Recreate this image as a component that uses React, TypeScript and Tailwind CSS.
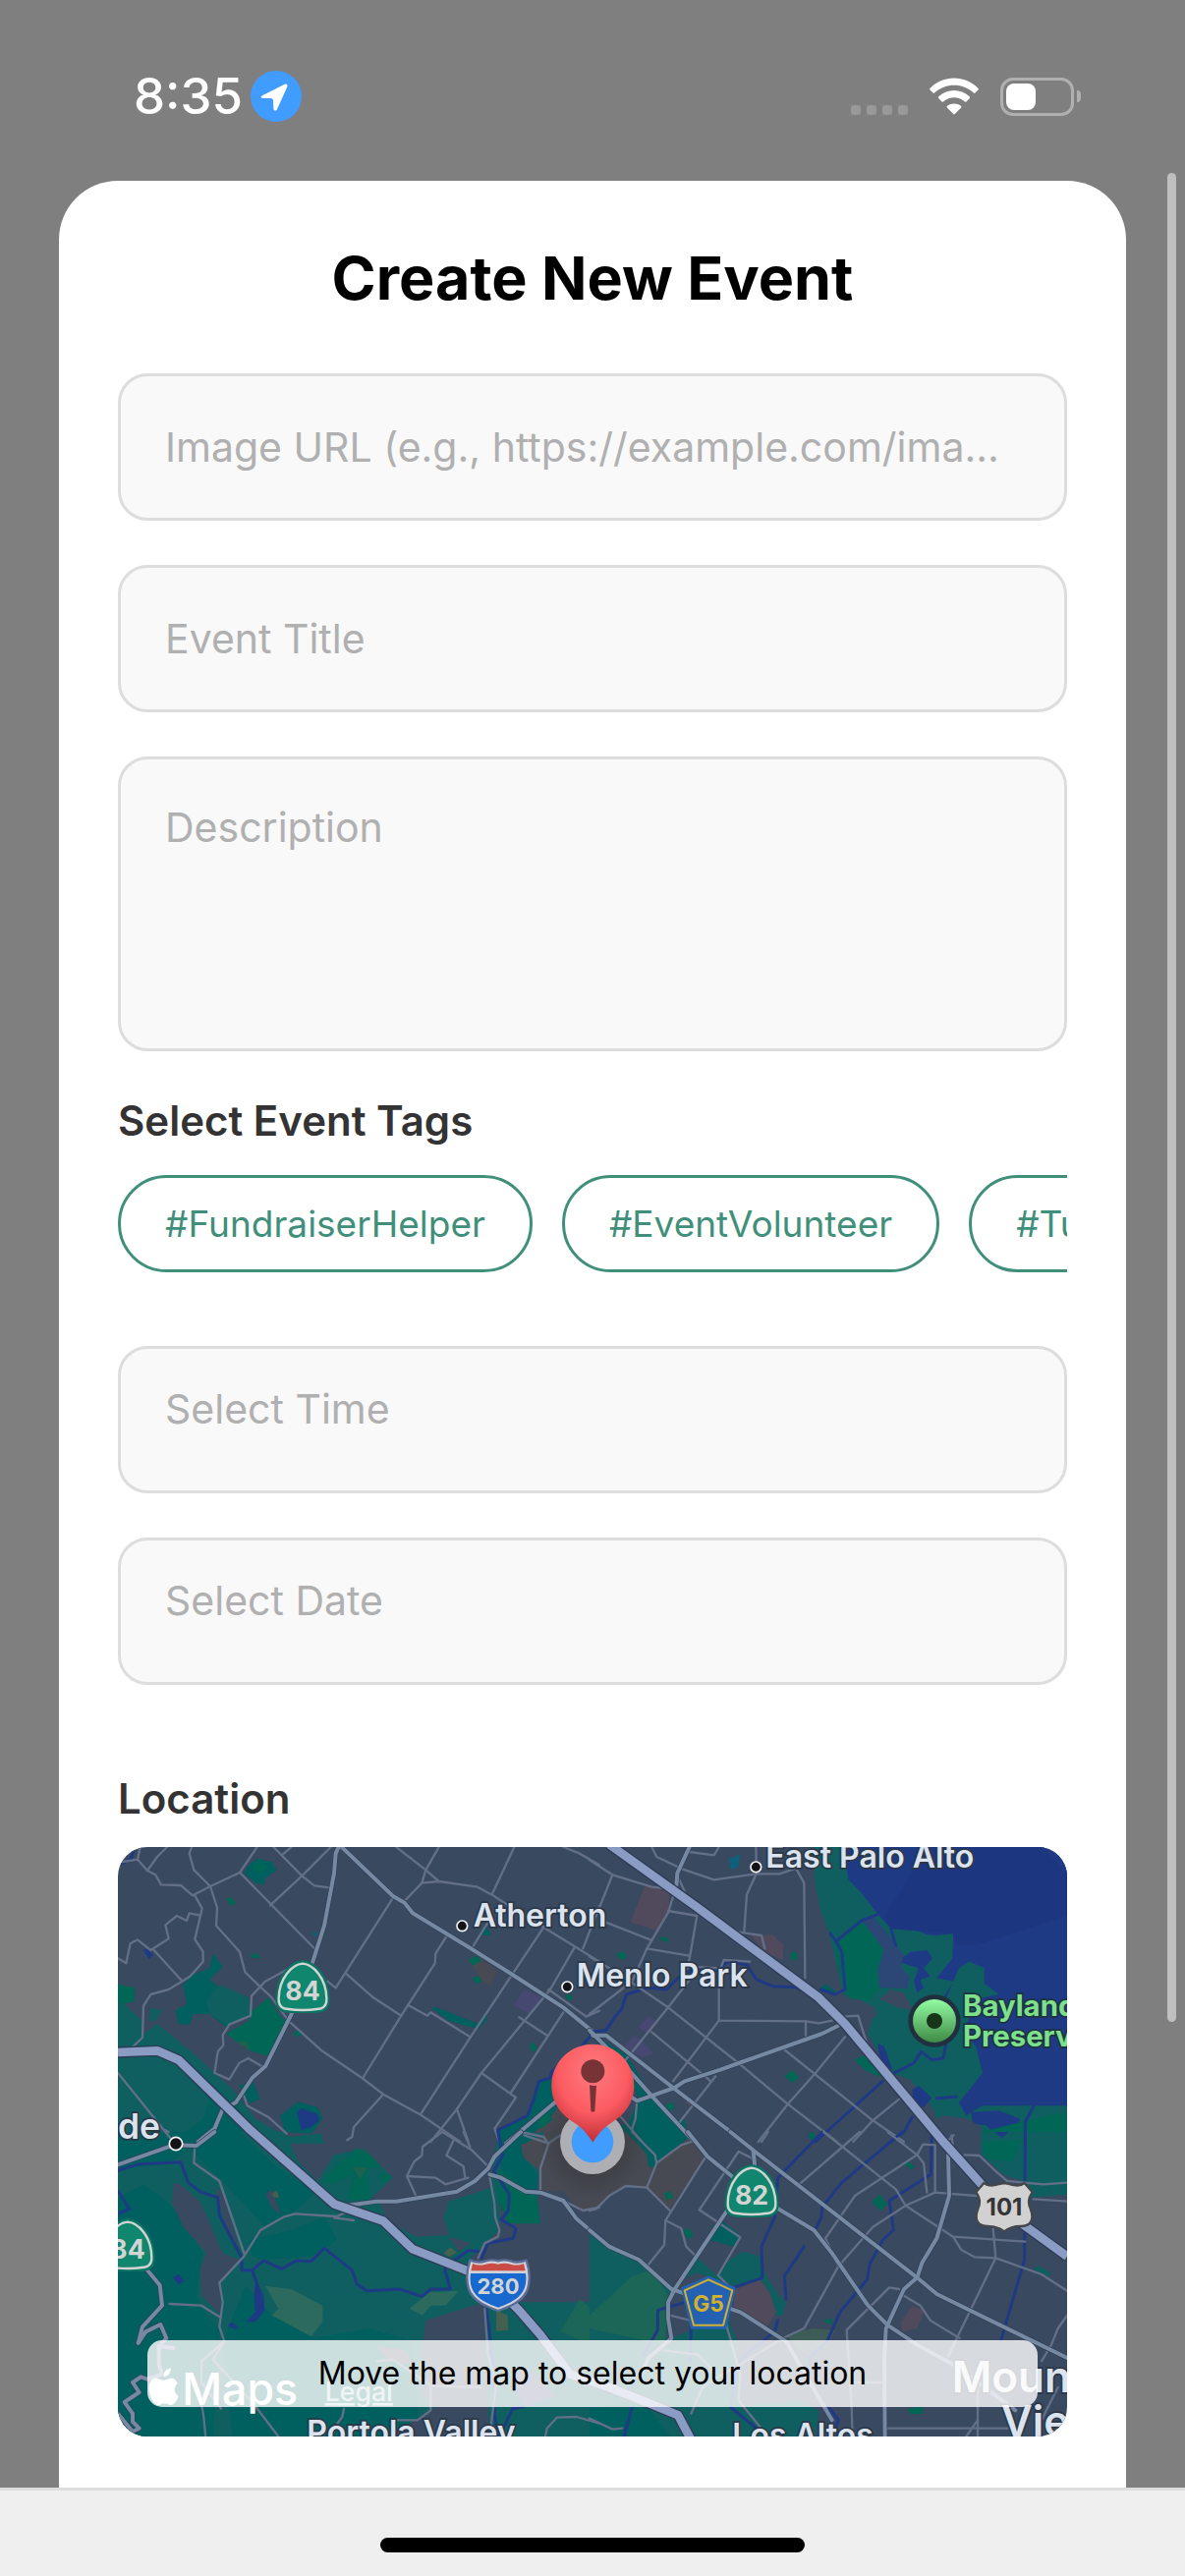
import type { ReactNode } from 'react';

const tags = ['#FundraiserHelper', '#EventVolunteer', '#TutoringHelp', '#FoodDrive'];

type Area = [color: string, points: string];

type Tile = {
  x: number;
  y: number;
  areas: Area[];
  streams: string[];
  streets: string[];
  roads: string[];
};

const slate = '#394960';
const teal = '#0f5f60';
const pine = '#005f5f';
const green = '#006656';
const water = '#1f3a85';
const rose = '#504a5c';
const violet = '#464872';
const campus = '#474a53';

// Every tile is drawn in its own coordinates and moved to its corner of the map.
const tiles: Tile[] = [
  {
    x: -30,
    y: -30,
    areas: [
      [teal, '110,600 150,570 260,660 380,770 450,860 545,915 650,905 660,935 30,935 30,670'],
      [pine, '250,740 300,735 400,830 460,930 200,930 290,860 310,800'],
      [pine, '400,760 440,740 465,800 430,812'],
      [teal, '30,450 30,645 70,640 105,610 105,560 50,510 80,500 80,460'],
      [green, '30,450 80,460 80,500 30,510'],
      [teal, '130,520 165,530 145,560 125,560'],
      [pine, '320,355 350,395 310,435 340,460 380,560 360,580 310,540 260,540 250,572 215,570 205,530 240,510 228,450 260,420 310,400'],
      [teal, '340,450 430,490 435,545 370,575 310,540 300,500'],
      [green, '490,490 520,540 550,570 490,670 430,650 360,600 430,560 440,530'],
      ['#1d6150', '385,622 425,625 435,650'],
      [pine, '455,65 500,75 515,100 480,125 475,145 450,140 415,110 430,85'],
      [green, '445,75 470,75 490,95 460,108 440,98'],
      [green, '360,188 375,184 393,205 375,208'],
      [green, '432,360 450,354 468,370 440,368'],
      [green, '565,600 578,588 594,602 575,610'],
      [pine, '525,850 580,808 640,825 655,860 620,905 540,900'],
      [water, '577,840 590,828 640,845 645,865 620,885 590,895'],
      [water, '107,345 120,340 138,360 125,372'],
      ['#0f5f78', '622,292 642,292 634,306'],
      [pine, '985,520 1010,522 1130,570 1160,525 1155,560 1130,585 1090,575 1040,560'],
      [campus, '1095,375 1140,370 1188,410 1170,455 1140,440 1115,395'],
      [green, '1100,375 1125,362 1140,376 1115,392'],
      [green, '1112,432 1130,422 1142,440 1125,448'],
      [pine, '1140,300 1155,272 1170,300'],
      [green, '1395,485 1410,478 1420,492 1405,500'],
      [violet, '1270,465 1325,490 1290,540 1238,515'],
      [green, '1285,640 1298,626 1310,644 1298,656'],
      [campus, '1330,790 1380,770 1440,830 1440,935 1270,935 1260,900'],
      [pine, '1310,750 1360,735 1390,800 1340,870 1290,910 1240,930 1190,930 1190,895 1280,850'],
      [green, '1310,850 1340,835 1358,862 1320,890'],
    ],
    streams: ['1500,595 1480,600 1445,640 1355,715 1350,735 1315,745 1300,800 1280,850 1190,895 1195,930', '42,80 70,66 78,40'],
    streets: [
      '30,370 55,385 68,325 90,313 130,345 185,310 175,268 210,240 240,255 248,232 278,238',
      '140,345 225,438',
      '45,75 90,68 120,102 145,115 162,145 222,147 258,178 312,150 402,108 455,30',
      '90,68 98,30',
      '120,102 150,60 180,30',
      '262,10 248,50 262,100 312,150 333,215 330,270 402,350 418,412 500,490 550,560 650,650 775,735 840,785 955,848 1075,930',
      '265,178 287,218 265,312 290,350 290,380 250,425 185,465 130,480 108,515 105,612 75,640',
      '402,108 635,345',
      '505,30 592,118 630,148 680,155',
      '530,55 560,30',
      '680,30 592,118 495,208',
      '880,30 970,100 1010,135',
      '1010,30 970,100 958,140 905,195',
      '958,140 1010,135 1128,152 1175,178 1330,275 1500,380',
      '1240,30 1172,175',
      '1390,30 1440,50 1500,85',
      '870,185 695,460 670,440',
      '725,415 810,490 895,545',
      '1035,300 1000,355 998,385 895,545 778,735',
      '915,512 975,545 985,535 1105,610',
      '1110,340 1160,260',
      '1330,275 1110,605 955,845',
      '1425,335 1350,465 1140,720 1065,830 985,930',
      '1390,535 1230,780',
      '1140,720 1245,795 1180,890 1195,930',
      '1255,550 1340,605',
      '1065,830 1100,930',
      '1345,465 1460,548 1500,530',
      '1500,210 1450,340',
      '840,785 750,885 745,915 730,925',
      '545,405 480,440 438,485 435,545 370,572 350,605 352,635 335,655 325,720 370,740 400,690 428,675 470,700',
      '415,790 425,820 490,855 545,905',
      '30,720 195,925',
      '1260,900 1330,915 1340,930',
    ],
    roads: [
      '708,20 695,50 690,110 660,270 625,380 560,540 480,700 440,735 390,810 350,830 325,890 275,930',
      '708,25 870,180 905,200 930,232 1100,335 1235,420 1390,520 1500,610',
      '1400,780 1215,935',
    ],
  },
  {
    x: 1440,
    y: -30,
    areas: [
      [teal, '680,30 1470,30 1470,935 1200,935 1195,880 1060,860 1050,830 980,740 920,720 850,600 870,530 830,500 775,480 730,290 705,220 690,150'],
      [water, '775,30 1470,30 1470,820 1200,820 1150,850 1128,810 1200,720 1180,640 1115,560 1080,490 1105,450 1205,460 1205,400 1160,380 1128,400 1110,440 1060,430 1040,360 1108,350 1110,300 1060,310 1000,285 920,280 880,235 830,170 790,130'],
      [teal, '1110,440 1210,450 1250,480 1200,490 1130,600 1085,500'],
      ['#1d3680', '1000,30 1380,30 1470,120 1470,235 1180,330 1120,330 1110,295 920,280 900,240 980,120'],
      [teal, '935,290 1060,300 1110,295 1108,370 1060,430 1000,480 920,460'],
      [water, '940,380 980,350 1030,345 1048,370 1020,400 1040,425 1010,435 1020,460 1000,475 990,440 1005,400'],
      [green, '750,320 840,250 890,300 892,360 875,410 885,460 850,500 790,492 770,430'],
      ['#2c4676', '830,252 870,245 960,360 950,395 978,430 970,462 885,460 882,400 900,345'],
      [slate, '885,495 920,465 960,475 990,530 940,520'],
      [slate, '820,495 870,520 875,545 850,560'],
      [pine, '700,465 720,448 750,470 760,480'],
      [green, '808,680 850,660 900,720 880,730 840,710'],
      [water, '880,630 900,640 925,710 890,700'],
      [water, '985,770 1005,760 1045,795 1020,825 990,815'],
      [water, '1165,840 1250,835 1315,860 1300,900 1250,920 1210,880 1170,875'],
      [green, '1195,900 1400,850 1470,840 1470,935 1195,935'],
      [slate, '1040,870 1080,850 1160,860 1195,890 1195,935 1090,935'],
      [rose, '170,145 245,165 240,225 205,285 125,260'],
      [rose, '495,300 560,298 592,330 590,375 530,350'],
      [violet, '180,545 208,570 180,600 150,580'],
      [violet, '135,605 160,620 195,660 160,675 105,640'],
      ['#0f5f78', '425,65 460,52 455,90 430,98'],
      [green, '210,310 235,302 242,322'],
      [green, '80,355 105,350 115,366 95,376'],
      [green, '615,352 634,352 634,374 615,374'],
      [green, '595,730 620,712 640,735 620,750'],
      [green, '665,912 680,898 690,915 678,925'],
      [pine, '40,620 110,660 190,790 320,935 90,935 150,800 110,700'],
      [campus, '150,900 180,890 210,935 130,935'],
      [green, '230,820 250,808 262,826 248,836'],
      [rose, '288,805 312,800 306,822'],
    ],
    streams: [
      '0,595 50,590 80,545 98,525 112,480 180,460 235,465 270,430 320,400 390,405 425,378 480,390 510,435 560,455 630,458 680,485',
      '705,465 750,480 780,465 770,350 752,318 830,255 880,235',
      '735,295 755,320',
      '920,725 990,690 1012,655 1045,680 1080,675 1090,620',
      '895,745 690,930',
      '985,855 960,900 920,930',
      '1440,660 1375,705 1382,770 1330,870 1330,935',
      '1060,797 1120,793',
      '920,280 935,330',
    ],
    streets: [
      '0,70 70,115 190,152 245,158',
      '70,115 20,240',
      '190,30 205,60 285,98 380,130 510,112 580,112 630,95',
      '305,45 380,55 395,30',
      '508,30 510,110 480,175 472,290',
      '630,95 655,140 658,430',
      '265,150 240,230 175,340 130,440 0,540',
      '240,225 328,240 300,400',
      '50,260 190,315',
      '175,340 305,362',
      '0,365 60,400 130,445 240,520 455,690 605,815 755,930',
      '265,110 290,165',
      '325,410 240,520 90,705',
      '395,440 395,560 660,562 700,568 740,560',
      '395,560 255,745',
      '660,562 660,605',
      '190,595 370,745',
      '590,645 865,865 960,930',
      '780,610 690,720 605,815 515,930',
      '945,800 865,865 805,930',
      '300,395 400,400 410,375 490,380',
      '455,290 525,300 535,340',
      '740,550 820,545 845,625',
      '145,805 140,860 130,890',
      '75,830 160,930',
      '385,730 275,870',
      '1090,930 1112,910',
    ],
    roads: [
      '305,30 268,110 265,150',
      '0,590 110,700 190,790 320,930',
      '10,605 50,605 255,765 470,930',
      '100,775 145,805 260,765 290,745 400,710 455,690 710,600 760,575',
    ],
  },
  {
    x: -30,
    y: 870,
    areas: [
      [teal, '30,0 540,0 580,90 640,150 690,70 780,50 870,140 800,205 900,215 1030,215 1170,170 1180,60 1190,20 1330,0 1310,180 1180,330 1110,380 1100,430 1160,520 1500,520 1500,935 30,935'],
      [pine, '30,0 400,0 520,110 640,180 560,250 480,290 350,150 250,50 180,100 30,110'],
      [pine, '30,200 110,160 200,230 290,370 270,500 300,560 340,600 320,935 30,935'],
      [pine, '430,330 560,300 660,260 700,330 620,380 480,390 440,380'],
      [pine, '420,470 500,560 630,630 800,600 930,640 950,935 380,935 350,640'],
      [slate, '200,155 220,160 280,210 350,370 400,390 340,460 345,560 285,500 280,420 300,370 230,290 195,220'],
      [slate, '325,165 350,190 405,370 360,290'],
      [slate, '480,190 500,175 520,230 525,255 500,230'],
      [slate, '830,215 1040,215 1025,260 1040,315 940,320 850,270'],
      [slate, '1040,320 1110,340 1070,365'],
      [slate, '1195,200 1240,290 1230,325 1150,340 1195,300'],
      [slate, '970,575 1150,520 1150,640 1165,935 850,935 1000,840 960,800 960,650'],
      [green, '655,150 700,100 760,50 800,70 835,108 790,110 800,210 730,205 750,130 680,160'],
      ['#1d6150', '745,105 790,110 770,145'],
      [green, '830,128 865,132 860,150 830,150'],
      [green, '1200,90 1310,200 1320,280 1220,280 1190,200'],
      [pine, '1190,20 1300,0 1260,60 1310,130 1310,200 1200,120'],
      [campus, '1260,40 1330,10 1500,0 1500,235 1440,240 1390,180 1320,180 1320,120 1270,80'],
      ['#2c6a5e', '480,470 560,480 655,530 655,580 620,625 500,560 520,540'],
      ['#2c6a5e', '920,540 980,490 1070,485 1030,530 985,530 960,560'],
      ['#46604f', '1185,545 1220,560 1222,605 1185,608'],
      ['#1c6657', '1440,510 1500,560 1500,660 1380,610'],
      ['#46604f', '1025,370 1045,352 1065,368 1040,382'],
      ['#46604f', '500,190 515,178 522,200 508,202'],
      [water, '452,450 475,500 478,545 450,580 422,580 450,550 445,500'],
      [water, '197,445 215,435 235,455 215,465'],
      [water, '365,590 380,580 400,600 385,602'],
      [violet, '1235,745 1280,715 1310,750 1365,805 1270,840 1250,800'],
      ['#4d4c60', '820,655 910,665 930,710 860,700'],
    ],
    streams: [
      '30,118 95,98 222,92 245,155 285,185 335,200 340,255 408,385 408,422 440,422 475,393 530,418 575,393 620,395 660,355 745,422 760,465 790,485 890,480 958,502 985,480 1045,480 1028,420 1045,400 1100,362 1140,365',
      '440,422 455,465',
      '30,180 65,235 30,250',
      '1190,0 1205,70 1178,120 1225,190 1222,240 1200,268 1245,295 1237,325 1160,340 1140,385',
      '1155,540 1175,700 1180,860 1190,935',
      '1205,910 1235,845 1270,838',
    ],
    streets: [
      '265,40 262,95 340,150 415,370',
      '185,0 175,-5',
      '700,258 570,250 535,260 465,300 415,380 340,460 350,520 340,595 355,640 320,695 440,825 520,930',
      '188,525 285,530 340,565',
      '355,640 285,700 285,765 345,845',
      '285,830 292,870 298,935',
      '1020,0 960,45 958,72 935,90 912,135 940,195',
      '912,135 1000,140 1030,160 1100,140',
      '1020,0 1110,55 1165,110',
      '1055,25 1033,72 1085,105 1090,140',
      '1085,0 1105,45',
      '1165,135 1180,220 1182,260 1195,300 1190,320 1150,340 1130,385',
      '1150,540 1160,680 1185,770 1165,930',
      '820,700 870,695 920,730 985,775 1140,780',
      '985,775 985,850 945,880 885,880',
      '720,845 715,870 690,905',
      '1335,930 1340,905 1370,872 1430,870 1500,890',
      '1270,10 1345,35 1320,110 1320,180',
      '1345,35 1380,10 1400,15',
      '1400,215 1450,240 1500,230',
      '770,225 690,262 750,270',
    ],
    roads: [
      '30,100 200,40 270,42 325,0',
      '725,225 820,212 880,212 1065,182 1120,150 1160,112 1180,75 1260,0',
      '1165,130 1200,140 1275,182 1320,185 1390,210 1430,265 1500,325',
      '118,420 158,468 165,530 105,595 92,645 115,610 160,588 178,630 155,655 155,710 165,740 120,755 100,748 75,765 95,795 50,825 75,860 75,885 95,905 75,915 30,860',
      '155,655 200,660',
    ],
  },
  {
    x: 1440,
    y: 870,
    areas: [
      [campus, '0,0 140,0 180,20 300,10 350,80 245,235 175,170 110,165 60,195 0,240'],
      [pine, '90,-20 290,-40 300,20 200,95 150,40'],
      [pine, '175,70 210,75 200,110 180,105'],
      [teal, '0,300 60,350 150,390 250,480 230,640 100,700 0,720'],
      [teal, '0,600 250,630 420,560 450,640 460,935 0,935'],
      ['#1c6657', '0,560 130,440 190,420 240,500 230,650 0,600'],
      [pine, '0,840 160,820 250,935 0,935'],
      [teal, '320,370 395,410 470,365 520,380 540,440 570,490 600,520 590,560 560,560 530,460 450,470 400,455 330,430 280,450'],
      [slate, '320,375 430,380 390,440'],
      [pine, '375,285 410,275 460,315 440,350 370,330'],
      [green, '285,300 305,295 318,315 300,328'],
      [green, '228,188 245,180 258,200 235,208'],
      [rose, '440,485 520,450 550,490 570,550 540,600 440,545'],
      [rose, '985,530 1022,545 1000,600 955,610 950,580'],
      ['#3d5c58', '600,620 680,600 750,605 720,660 640,670'],
      [green, '712,575 740,570 740,590'],
      [green, '862,215 885,190 910,220 890,240'],
      [green, '962,98 975,90 992,108 980,115'],
      [teal, '1195,0 1470,0 1470,190 1340,200 1320,150 1265,130 1195,70'],
      [green, '1200,30 1320,25 1290,90 1210,80'],
      [teal, '1355,420 1370,408 1410,432 1400,440'],
      [green, '970,845 1015,840 1018,860 980,862'],
      [water, '1235,0 1280,0 1260,18'],
      [teal, '430,840 640,820 700,850 690,935 440,935'],
    ],
    streams: [
      '710,0 575,140 565,260 525,350 528,445 440,475',
      '955,0 770,155 710,230 708,260 692,295',
      '1045,10 1042,130 915,210 928,300 895,330 855,405 848,450 765,550 725,640 670,690 680,740',
      '655,350 595,440 600,510',
      '575,575 565,610 455,700 430,840 540,930',
      '1330,0 1328,390 1255,640',
      '285,522 208,545 208,605 165,680',
      '310,595 308,700',
      '130,840 105,930',
      '730,840 760,880 750,905',
      '1250,820 1290,870',
    ],
    streets: [
      '130,0 200,70 205,95 175,170 110,165 60,195 20,235 0,240',
      '205,95 280,40 310,30',
      '175,170 245,240',
      '352,80 232,270 228,345 180,405',
      '232,270 280,295 295,350 325,380',
      '545,0 525,30',
      '505,85 455,60 335,238 460,322 392,438 420,465',
      '715,0 935,175 965,225 1110,320 1330,335',
      '825,0 640,160',
      '910,0 1000,70 1020,95 1030,185',
      '1000,70 1018,38 1055,40 1055,185',
      '1000,70 810,195 720,325 760,410 655,600 590,630',
      '1180,195 1055,185 965,225 865,290 760,410',
      '1145,70 1190,72 1240,120 1275,150 1385,160 1458,155',
      '1355,205 1458,212',
      '1110,320 1135,360 1175,382 1240,385 1380,435 1458,485',
      '1232,295 1240,385 1095,685',
      '945,480 915,475 785,605 800,840 803,935',
      '960,500 1010,530 1040,575 1130,630',
      '415,580 460,740 455,820 520,900',
      '590,630 460,710 390,750 345,780 310,860',
      '245,560 305,575',
      '210,665 330,680 370,720 390,770',
      '800,765 900,765',
      '905,905 1290,905',
      '1185,765 1185,935',
      '1150,930 1185,880',
      '0,875 70,908 100,905',
      '1458,560 1430,600 1410,650 1380,700',
      '1430,780 1380,880',
      '1105,10 1112,60',
    ],
    roads: [
      '300,0 360,75 440,140 560,225 685,300 740,370 850,530 910,590 1000,650 1110,710 1300,850',
      '430,0 505,60 1000,445 1060,495 1458,690',
      '500,60 505,110',
      '0,300 60,350 150,390 250,480 460,550 600,640 740,880',
      '420,240 260,480 240,520 240,570 250,630 180,690 155,745',
      '1095,70 1098,195 1060,325 1015,400 1000,445 960,480 905,600 900,690 902,935',
    ],
  },
];

const highways = [
  '0,627 120,622 185,650 400,860 660,1090 810,1142 900,1228 1070,1295 1160,1350 1225,1415 1290,1490 1380,1610 1500,1650 1600,1690 1710,1735 1750,1810',
  '1500,-8 1770,185 2140,460 2220,540 2520,900 2650,1045 2760,1150 2898,1250',
];

const places = [
  { name: 'Atherton', x: 1085, y: 243, dot: [1051, 241] },
  { name: 'Menlo Park', x: 1400, y: 427, dot: [1372, 427] },
  { name: 'East Palo Alto', x: 1978, y: 62, dot: [1948, 61] },
  { name: 'Portola Valley', x: 577, y: 1820 },
  { name: 'Los Altos', x: 1876, y: 1830 },
];

function StateShield({ x, y, label }: { x: number; y: number; label: string }) {
  return (
    <g transform={`translate(${x} ${y})`}>
      <path
        d="M0-78C34-76 80-34 80 40C80 66 66 78 42 78H-42C-66 78-80 66-80 40C-80-34-34-76 0-78Z"
        fill="#11866e"
        stroke="#0c7362"
        strokeWidth="6"
      />
      <path
        d="M0-70C30-68 73-28 73 40C73 60 64 69 42 69C20 73-20 73-42 69C-64 69-73 60-73 40C-73-28-30-68 0-70Z"
        fill="none"
        stroke="#d3d5d4"
        strokeWidth="7"
      />
      <text y="42" textAnchor="middle" fontSize="80" fontWeight="700" fill="#d3d5d4">
        {label}
      </text>
    </g>
  );
}

function EventMap() {
  return (
    <svg
      className="h-[600px] w-full"
      viewBox="0 0 2898 1800"
      preserveAspectRatio="xMidYMid slice"
      fontFamily="Inter, 'Liberation Sans', sans-serif"
      role="img"
      aria-label="Map around Menlo Park"
    >
      <defs>
        <radialGradient id="pin" cx="50%" cy="28%" r="70%">
          <stop offset="0" stopColor="#ff7a7e" />
          <stop offset="0.6" stopColor="#fb5b61" />
          <stop offset="1" stopColor="#c03238" />
        </radialGradient>
        <linearGradient id="preserve" x1="0" y1="0" x2="0" y2="1">
          <stop offset="0" stopColor="#93fca2" />
          <stop offset="1" stopColor="#3f8a45" />
        </linearGradient>
        <radialGradient id="shade">
          <stop offset="0.4" stopColor="#303030" stopOpacity="0.5" />
          <stop offset="1" stopColor="#303030" stopOpacity="0" />
        </radialGradient>
      </defs>
      <rect width="2898" height="1800" fill={slate} />

      {tiles.map((tile) => (
        <g key={`areas-${tile.x}-${tile.y}`} transform={`translate(${tile.x} ${tile.y})`}>
          {tile.areas.map(([color, points]) => (
            <polygon key={points} points={points} fill={color} />
          ))}
        </g>
      ))}
      {tiles.map((tile) => (
        <g
          key={`lines-${tile.x}-${tile.y}`}
          transform={`translate(${tile.x} ${tile.y})`}
          fill="none"
          strokeLinejoin="round"
          strokeLinecap="round"
        >
          {tile.streams.map((points) => (
            <polyline key={points} points={points} stroke={water} strokeWidth="9" />
          ))}
          {tile.streets.map((points) => (
            <polyline key={points} points={points} stroke="#626f87" strokeWidth="7" />
          ))}
          {tile.roads.map((points) => (
            <polyline key={points} points={points} stroke="#303f55" strokeWidth="16" />
          ))}
          {tile.roads.map((points) => (
            <polyline key={`${points}-top`} points={points} stroke="#7589a3" strokeWidth="12" />
          ))}
        </g>
      ))}
      <g fill="none" strokeLinejoin="round">
        {highways.map((points) => (
          <polyline key={points} points={points} stroke="#2d3b55" strokeWidth="34" />
        ))}
        {highways.map((points) => (
          <polyline key={`${points}-top`} points={points} stroke="#8a9cc4" strokeWidth="26" />
        ))}
      </g>

      <StateShield x={564} y={426} label="84" />
      <StateShield x={1935} y={1050} label="82" />
      <StateShield x={30} y={1215} label="84" />

      <g transform="translate(1161 1338)">
        <path
          d="M-86-76Q-60-66-38-74Q-18-80 0-74Q18-80 38-74Q60-66 86-76Q102-28 90 12C76 50 34 66 0 78C-34 66-76 50-90 12Q-102-28-86-76Z"
          fill="#d0d2d8"
          stroke="#5b6c96"
          strokeWidth="7"
        />
        <path d="M-78-66Q-60-58-38-64Q-18-70 0-64Q18-70 38-64Q60-58 78-66L83-44H-83Z" fill="#ca4c46" />
        <path d="M-84-36H84Q88-10 80 10C68 42 30 58 0 68C-30 58-68 42-80 10Q-88-10-84-36Z" fill="#1768cf" />
        <text y="26" textAnchor="middle" fontSize="66" fontWeight="700" fill="#d3d5d4">
          280
        </text>
      </g>

      <g transform="translate(2706 1098)">
        <path
          d="M-62-72Q-46-60-28-66Q-12-70 0-72Q12-70 28-66Q46-60 62-72L86-44Q68-20 80 6C94 44 78 60 50 60Q20 60 0 76Q-20 60-50 60C-78 60-94 44-80 6Q-68-20-86-44Z"
          fill="#d1d1d2"
          stroke="#45464a"
          strokeWidth="7"
        />
        <text y="28" textAnchor="middle" fontSize="72" fontWeight="700" fill="#343537">
          101
        </text>
      </g>

      <g transform="translate(1803 1391)">
        <path d="M0-78L80-44L52 78H-52L-80-44Z" fill="#2561b3" stroke="#2561b3" strokeWidth="6" strokeLinejoin="round" />
        <path d="M0-70L73-37L45 69H-45L-73-37Z" fill="none" stroke="#d1b22f" strokeWidth="6" strokeLinejoin="round" />
        <text y="28" textAnchor="middle" fontSize="68" fontWeight="700" fill="#d1b22f">
          G5
        </text>
      </g>

      <g fill="#dbe4ee" stroke="#2b3747" strokeWidth="10" paintOrder="stroke" fontWeight="600" fontSize="96">
        {places.map((place) => (
          <text key={place.name} x={place.x} y={place.y}>
            {place.name}
          </text>
        ))}
        <text x="0" y="892" fontSize="106">
          de
        </text>
        <text x="2546" y="1665" fontSize="132">
          Mountain
        </text>
        <text x="2696" y="1800" fontSize="132">
          View
        </text>
      </g>
      <g fill="#7fe08c" stroke="#1c3440" strokeWidth="10" paintOrder="stroke" fontWeight="700" fontSize="88">
        <text x="2580" y="517">
          Baylands
        </text>
        <text x="2580" y="608">
          Preserve
        </text>
      </g>
      <g fill="#141418" stroke="#f2f4f7" strokeWidth="5">
        {places.map((place) => place.dot && <circle key={place.name} cx={place.dot[0]} cy={place.dot[1]} r="16" />)}
        <circle cx="177" cy="906" r="20" />
      </g>

      <circle cx="2493" cy="531" r="80" fill="#20303f" />
      <circle cx="2493" cy="531" r="66" fill="url(#preserve)" />
      <circle cx="2493" cy="531" r="24" fill="#173519" />

      <circle cx="1449" cy="912" r="160" fill="url(#shade)" />
      <circle cx="1449" cy="900" r="99" fill="#aeafb4" />
      <circle cx="1449" cy="900" r="64" fill="#409cff" />
      <path
        d="M1450 602C1520 602 1576 658 1576 728C1576 782 1546 818 1506 842C1476 862 1466 878 1450 902C1434 878 1424 862 1394 842C1354 818 1324 782 1324 728C1324 658 1380 602 1450 602Z"
        fill="url(#pin)"
      />
      <circle cx="1450" cy="685" r="36" fill="#783337" />
      <path d="M1440 726Q1450 730 1461 728L1456 806Q1450 812 1444 806Z" fill="#783337" />

      <g fill="#fff">
        <path
          transform="translate(94 1588)"
          d="M70 34C60 34 54 40 46 40C38 40 30 33 20 34C6 36 0 50 1 70C3 92 16 116 30 116C36 116 40 111 48 111C56 111 60 116 67 116C78 116 86 102 91 88C78 82 74 62 88 50C84 40 78 35 70 34ZM46 30C45 16 54 6 67 3C69 18 58 29 46 30Z"
        />
        <text x="196" y="1704" fontSize="134" fontWeight="500">
          Maps
        </text>
        <text x="632" y="1692" fontSize="80" fontWeight="500" textDecoration="underline" fillOpacity="0.7">
          Legal
        </text>
      </g>
    </svg>
  );
}

function StatusBar() {
  return (
    <header className="flex h-[184px] items-center justify-between pt-3 pr-[106px] pl-[136px] text-white">
      <div className="flex items-center gap-2">
        <span className="text-[51px] font-medium">8:35</span>
        <svg className="size-[52px]" viewBox="0 0 156 156">
          <circle cx="78" cy="78" r="78" fill="#409cff" />
          <path
            d="M36 76L104 41Q114 38 112 49L80 120Q73 126 70 117L69 90Q68 84 62 84L37 84Q27 82 36 76Z"
            fill="#fff"
          />
        </svg>
      </div>
      <div className="flex items-center">
        <div className="mt-7 flex gap-[6px]">
          <i className="size-[10px] rounded-[3px] bg-[#999]" />
          <i className="size-[10px] rounded-[3px] bg-[#999]" />
          <i className="size-[10px] rounded-[3px] bg-[#999]" />
          <i className="size-[10px] rounded-[3px] bg-[#999]" />
        </div>
        <svg className="ml-[22px] h-[38px] w-[50px]" viewBox="0 0 150 112" fill="#fff">
          <path d="M2 31C42-10 108-10 148 31Q151 34 148 37L140 45Q137 48 134 45C101 15 49 15 16 45Q13 48 10 45L2 37Q-1 34 2 31Z" />
          <path d="M28 57C55 32 95 32 122 57Q125 60 122 63L113 72Q110 75 107 72C88 56 62 56 43 72Q40 75 37 72L28 63Q25 60 28 57Z" />
          <path d="M54 85C66 76 84 76 96 85Q99 88 96 91L78 109Q75 112 72 109L54 91Q51 88 54 85Z" />
        </svg>
        <div className="ml-[22px] flex h-[39px] w-[75px] items-center rounded-[13px] border-3 border-[#b0b0b0] pl-[3px]">
          <div className="h-[27px] w-[30px] rounded-[8px] bg-white" />
        </div>
        <div className="ml-[3px] h-3 w-1 rounded-r-full bg-[#b0b0b0]" />
      </div>
    </header>
  );
}

const fieldClass =
  'block w-full rounded-[30px] border-3 border-[#ddd] bg-[#f9f9f9] px-[45px] text-[41px] text-black placeholder:text-[#b0b0b0] placeholder:opacity-100';

function PickerField({ children }: { children: ReactNode }) {
  return (
    <button
      type="button"
      className="flex h-[150px] w-full items-start rounded-[30px] border-3 border-[#ddd] bg-[#f9f9f9] px-[45px] pt-9 text-[41px] leading-[51px] text-[#b0b0b0]"
    >
      {children}
    </button>
  );
}

export default function App() {
  return (
    <div className="relative flex min-h-screen flex-col bg-[#7f7f7f] font-[Inter,'Liberation_Sans',sans-serif]">
      <StatusBar />

      <main className="mx-[60px] grow rounded-t-[60px] bg-white px-[60px] pt-[60px] pb-[52px]">
        <h1 className="mb-[58px] text-center text-[61px] leading-[78px] font-bold text-black">Create New Event</h1>

        <form>
          <div className="flex flex-col gap-[45px]">
            <input
              className={`${fieldClass} h-[150px]`}
              aria-label="Image URL"
              placeholder="Image URL (e.g., https://example.com/ima..."
            />
            <input className={`${fieldClass} h-[150px]`} aria-label="Event Title" placeholder="Event Title" />
            <textarea
              className={`${fieldClass} h-[300px] resize-none pt-11 leading-[51px]`}
              aria-label="Description"
              placeholder="Description"
            />
          </div>

          <h2 className="mt-[45px] mb-[30px] text-[42px] leading-[51px] font-semibold text-[#333]">Select Event Tags</h2>
          <div className="mb-[75px] flex gap-[30px] overflow-hidden">
            {tags.map((tag) => (
              <button
                key={tag}
                type="button"
                className="h-[99px] shrink-0 rounded-full border-3 border-[#3f8f7b] px-[45px] text-[37px] text-[#3f8f7b]"
              >
                {tag}
              </button>
            ))}
          </div>

          <div className="flex flex-col gap-[45px]">
            <PickerField>Select Time</PickerField>
            <PickerField>Select Date</PickerField>
          </div>

          <h2 className="mt-[90px] mb-6 text-[42px] leading-[51px] font-semibold text-[#333]">Location</h2>
          <div className="relative overflow-hidden rounded-[30px]">
            <EventMap />
            <p className="absolute inset-x-[30px] bottom-[30px] rounded-[15px] bg-white/80 text-center text-[32px] leading-[68px] text-black">
              Move the map to select your location
            </p>
          </div>
        </form>
      </main>

      <footer className="flex h-[90px] items-center justify-center border-t-3 border-[#ddd] bg-[#efefef] pt-6">
        <div className="h-[15px] w-[432px] rounded-full bg-black" />
      </footer>

      <div className="absolute top-[176px] right-[9px] h-[1882px] w-[9px] rounded-full bg-[#bfbfbf]" />
    </div>
  );
}
